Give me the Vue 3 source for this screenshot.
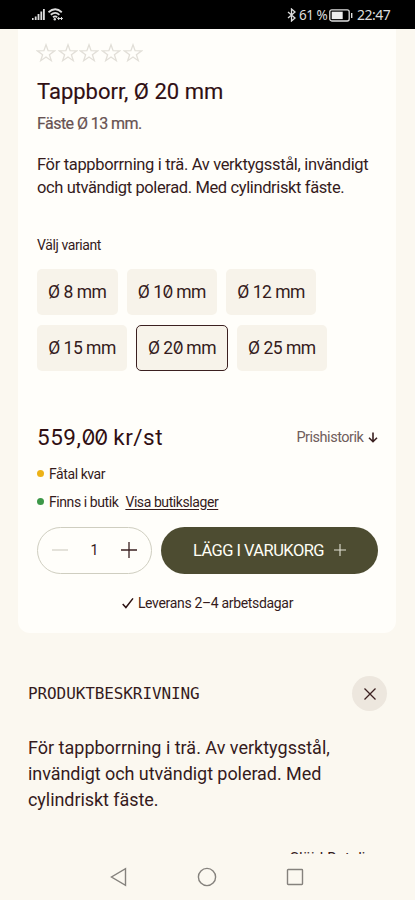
<script setup>
import { ref } from 'vue'

const variants = [['8', '10', '12'], ['15', '20', '25']]
const selected = ref('20')
const quantity = ref(1)
</script>

<template>
  <div class="screen">
    <header class="status">
      <svg class="signal" viewBox="0 0 32 14" width="32" height="14">
        <g fill="#ddd">
          <rect x="0" y="10" width="1.6" height="2" /><rect x="2.8" y="8.5" width="1.8" height="3.5" />
          <rect x="5.6" y="6" width="1.8" height="6" /><rect x="8.4" y="3.5" width="1.8" height="8.5" />
          <rect x="11" y="1" width="1.8" height="11" />
        </g>
        <g fill="none" stroke="#ddd" stroke-width="1.8">
          <path d="M16.5 4.2Q23.2-1.6 29.8 4.2" /><path d="M18.8 6.8Q23.2 3 27.4 6.8" /><path d="M21 9.3Q23.2 7.4 25.2 9.3" />
          <path d="M25.8 10.5h4.6M27.2 9l-1.5 1.5 1.5 1.5M29 9l1.5 1.5L29 12" stroke-width="1" />
        </g>
        <circle cx="22.8" cy="11.2" r="1.2" fill="#ddd" />
      </svg>
      <div class="status-right">
        <svg viewBox="0 0 9 14" width="9" height="14" fill="none" stroke="#ddd" stroke-width="1.3">
          <path d="M1 4l7 6-3.5 3V1L8 4l-7 6" />
        </svg>
        <span class="percent">61 %</span>
        <svg class="battery" viewBox="0 0 24 13" width="24" height="13">
          <rect x=".8" y=".8" width="19.4" height="11.2" rx="2" fill="none" stroke="#ddd" stroke-width="1.3" />
          <rect x="2.7" y="2.7" width="11" height="7.4" fill="#eee" /><rect x="22" y="4" width="1.4" height="5" fill="#ddd" />
        </svg>
        <span class="clock">22:47</span>
      </div>
    </header>

    <main class="card">
      <div class="stars">
        <svg v-for="n in 5" :key="n" viewBox="0 0 20 20" width="20" height="20">
          <path d="M10 1.8l2.1 5.9 6.6.1-5.3 3.9 1.9 6-5.3-3.7-5.3 3.7 1.9-6L1.3 7.8l6.6-.1z" fill="none" stroke="#e2dfd8" stroke-width="1.3" />
        </svg>
      </div>
      <h1>Tappborr, Ø 20 mm</h1>
      <p class="subtitle">Fäste Ø 13 mm.</p>
      <p class="intro">För tappborrning i trä. Av verktygsstål, invändigt<br><span class="second-line">och utvändigt polerad. Med cylindriskt fäste.</span></p>
      <p class="label">Välj variant</p>
      <div class="variants">
        <div v-for="(row, i) in variants" :key="i" class="row">
          <button v-for="size in row" :key="size" class="chip" :class="{ short: size === '8', selected: selected === size }" @click="selected = size">
            <span>Ø <template v-for="d in size" :key="d"><i v-if="d === '0'" class="zero">0</i><template v-else>{{ d }}</template></template> mm</span>
          </button>
        </div>
      </div>
      <div class="price-row">
        <strong class="price">559,<i class="zero">0</i><i class="zero">0</i> kr/st</strong>
        <span class="history">Prishistorik
          <svg viewBox="0 0 10 11" width="10" height="11" fill="none" stroke="#3b2020" stroke-width="1.6"><path d="M5 .5v9M1 5.8l4 3.9 4-3.9" /></svg>
        </span>
      </div>
      <p class="stock"><i class="dot few"></i><span>Fåtal kvar</span></p>
      <p class="stock second"><i class="dot"></i><span>Finns i butik</span><a>Visa butikslager</a></p>
      <div class="buy">
        <div class="stepper">
          <svg viewBox="0 0 16 16" width="16" height="16"><path d="M0 8h16" stroke="#d5d2ca" stroke-width="1.3" /></svg>
          <span>{{ quantity }}</span>
          <svg viewBox="0 0 16 16" width="16" height="16"><path d="M0 8h16M8 0v16" stroke="#3b2020" stroke-width="1.3" /></svg>
        </div>
        <button class="add">
          <span>LÄGG I VARUKORG</span>
          <svg viewBox="0 0 12 12" width="12" height="12"><path d="M0 6h12M6 0v12" stroke="#e2e0d4" stroke-width="1.1" /></svg>
        </button>
      </div>
      <p class="delivery">
        <svg viewBox="0 0 12 12" width="12" height="12" fill="none" stroke="#2b1111" stroke-width="1.5"><path d="M.7 7l3.2 3.5L11 1.4" /></svg>
        <span>Leverans 2–4 arbetsdagar</span>
      </p>
    </main>

    <section class="details">
      <div class="details-head">
        <h2>PRODUKTBESKRIVNING</h2>
        <button class="close"><svg viewBox="0 0 12 12" width="12" height="12"><path d="M.5.5l11 11M11.5.5l-11 11" stroke="#3b2020" stroke-width="1.3" /></svg></button>
      </div>
      <p class="long">För tappborrning i trä. Av verktygsstål,<br><span class="tight">invändigt och utvändigt polerad. Med<br>cylindriskt fäste.</span></p>
      <div class="cut"><span>Slöjd-Detaljer</span></div>
    </section>

    <nav class="navbar">
      <svg viewBox="0 0 18 20" width="18" height="20"><path d="M16.5 1.7v16.6L2.5 10z" /></svg>
      <svg viewBox="0 0 20 20" width="20" height="20"><circle cx="10" cy="10" r="8.6" /></svg>
      <svg viewBox="0 0 18 18" width="18" height="18"><rect x="1.5" y="1.5" width="15" height="15" rx=".7" /></svg>
    </nav>
  </div>
</template>

<style>
body { margin: 0; background: #fbf8f0; }
</style>

<style scoped>
* { box-sizing: border-box; }
.screen { width: 415px; height: 900px; overflow: hidden; display: flex; flex-direction: column; background: #fbf8f0; color: #351b1c; font-family: Roboto, "Liberation Sans", sans-serif; white-space: nowrap; }
h1, h2, p { margin: 0; font-weight: 400; }
button { font: inherit; color: inherit; border: 0; padding: 0; }
svg { display: block; flex: none; }
.status { height: 29px; flex: none; background: #000; color: #ddd; display: flex; justify-content: space-between; padding: 0 25px 0 32px; }
.signal { margin-top: 8px; }
.status-right { display: flex; align-items: center; height: 30px; font: 14px/30px "Noto Sans", sans-serif; }
.percent { margin-left: 3px; width: 28px; font-size: 13.5px; letter-spacing: -.5px; }
.battery { margin: 0 4px 0 2px; }
.clock { width: 33px; letter-spacing: -.5px; }
.card { height: 604px; flex: none; margin: 0 19px 0 18px; padding: 14px 18px 0 19px; background: #fffefa; border-radius: 0 0 12px 12px; }
.stars { display: flex; gap: 1.7px; margin-left: -1px; height: 20px; }
h1 { font-size: 22px; line-height: 30px; margin-top: 14px; color: #300f13; letter-spacing: 0; -webkit-text-stroke: .15px; }
.subtitle { font-size: 16px; line-height: 22px; margin-top: 6px; color: #675252; -webkit-text-stroke: .2px; letter-spacing: -.55px; }
.intro { font-size: 16.5px; line-height: 23px; margin-top: 18px; letter-spacing: -.33px; }
.second-line { letter-spacing: -.38px; }
.label { font-size: 14px; line-height: 20px; margin-top: 36px; letter-spacing: -.4px; }
.variants { display: flex; flex-direction: column; gap: 9.5px; margin-top: 14px; }
.row { display: flex; gap: 9.3px; }
.chip { height: 46px; width: 90px; border-radius: 5px; background: #f7f3ea; font-size: 17.5px; line-height: 22px; letter-spacing: -.5px; display: flex; align-items: center; justify-content: center; }
.chip.short { width: 80.5px; }
.chip.selected { width: 91.3px; border: 1.3px solid #3b2020; }
.zero { font-family: Inter, sans-serif; font-style: normal; font-feature-settings: "zero"; font-size: .98em; line-height: 0; letter-spacing: -1px; }
.price-row { display: flex; justify-content: space-between; align-items: center; height: 32px; margin-top: 50px; }
.price { font-size: 22.5px; font-weight: 400; letter-spacing: .5px; color: #300f13; }
.history { display: flex; align-items: center; gap: 4px; font-size: 14.5px; color: #705d5c; letter-spacing: -.47px; padding-top: 1px; margin-right: .5px; }
.stock { display: flex; align-items: center; height: 20px; margin-top: 11px; font-size: 14px; letter-spacing: -.42px; }
.stock.second { margin-top: 8px; }
.dot { width: 7px; height: 7px; border-radius: 50%; background: #3d9848; margin-right: 5px; }
.few { background: #edb216; }
.stock a { margin-left: 7px; text-decoration: underline; text-underline-offset: 2px; }
.buy { display: flex; gap: 9px; margin-top: 15px; }
.stepper { width: 115px; height: 47px; border: 1.3px solid #cfcec0; border-radius: 24px; display: flex; align-items: center; justify-content: space-between; padding: 0 14px; font-size: 14px; }
.add { width: 217px; height: 47px; border-radius: 24px; background: #4d4c31; color: #fffef5; display: flex; align-items: center; justify-content: center; gap: 10px; font-size: 16.5px; letter-spacing: -.55px; }
.delivery { display: flex; align-items: center; justify-content: center; gap: 4px; height: 20px; margin-top: 19px; font-size: 14px; letter-spacing: -.33px; }
.details { padding: 43px 28px 0; height: 221px; flex: none; overflow: hidden; }
.details-head { display: flex; justify-content: space-between; align-items: center; height: 35px; }
h2 { font: 16px/24px "DejaVu Sans Mono", monospace; letter-spacing: -.1px; }
.close { width: 35px; height: 35px; border-radius: 50%; background: #ede7de; display: flex; align-items: center; justify-content: center; }
.long { margin-top: 24px; font-size: 18px; line-height: 26px; }
.tight { letter-spacing: -.06px; }
.cut { margin-top: 35px; padding-left: 262px; font-size: 15px; line-height: 20px; letter-spacing: 0; }
.navbar { height: 46px; padding: 0 111px 0 109px; display: flex; align-items: center; justify-content: space-between; }
.navbar svg { fill: none; stroke: #85827d; stroke-width: 1.4; }
</style>
